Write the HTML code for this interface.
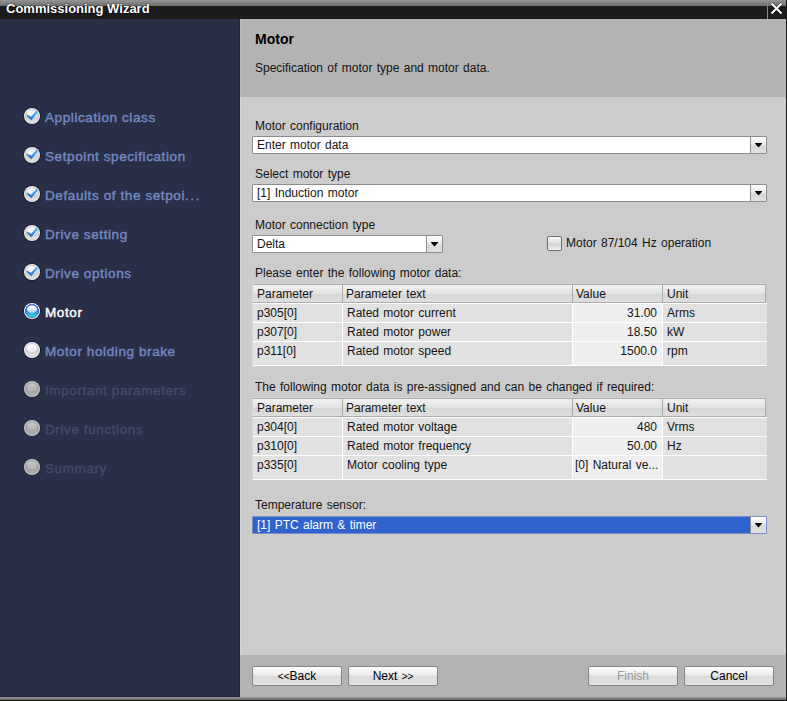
<!DOCTYPE html>
<html><head><meta charset="utf-8">
<style>
*{margin:0;padding:0;box-sizing:border-box}
html,body{width:787px;height:701px;overflow:hidden;background:#cccccc}
body{position:relative;font-family:"Liberation Sans",sans-serif;font-size:12px;color:#000}
.a{position:absolute;white-space:nowrap}
.t12{font-size:12px;line-height:14px;word-spacing:1px;color:#141414}
.item{left:45px;font-size:13.5px;line-height:16px;letter-spacing:0.6px;-webkit-text-stroke:0.45px currentColor;color:#7088c0}
.item.cur{color:#ffffff}
.item.dis{color:#434a67}
.dd{left:252px;width:515px;height:18px;border:1px solid #8c8c8c;border-radius:1px;background:#fff}
.dd .btn{position:absolute;right:0;top:0;width:16px;height:16px;border-left:1px solid #8c8c8c;background:linear-gradient(#ffffff,#ececec 45%,#d9d9d9 55%,#e2e2e2)}
.dd .btn:after{content:"";position:absolute;left:3.5px;top:6px;width:8px;height:4.5px;background:#000;clip-path:polygon(0 0,100% 0,50% 100%)}
.btn2{height:20px;width:90px;border:1px solid #868686;border-radius:2px;background:linear-gradient(#fdfdfd,#ececec 45%,#d9d9d9 52%,#e3e3e3);text-align:center;font-size:12px;line-height:18px;word-spacing:1px;color:#000}
.thd{height:19px;border-top:1px solid #ababab;border-bottom:1px solid #ababab;background:linear-gradient(#f3f3f3,#e2e2e2 50%,#d6d6d6 52%,#dedede)}
</style></head><body>
<div class="a" style="left:0px;top:0px;width:787px;height:19px;background:#1c1c1c"></div>
<div class="a" style="left:0px;top:0px;width:786px;height:6px;background:linear-gradient(#959595,#6c6c6c)"></div>
<div class="a" style="left:6px;top:1px;font-weight:bold;font-size:13px;line-height:15px;color:#fff;text-shadow:0 0 1px #000,0 0 1px #000">Commissioning Wizard</div>
<div class="a" style="left:767px;top:0px;width:1px;height:19px;background:#8a8a8a"></div>
<svg class="a" style="left:768px;top:0" width="19" height="19" viewBox="0 0 19 19"><path d="M3.5 3.5 L13.5 13.5 M13.5 3.5 L3.5 13.5" stroke="#000" stroke-opacity="0.6" stroke-width="3.2"/><path d="M3.5 3.5 L13.5 13.5 M13.5 3.5 L3.5 13.5" stroke="#fff" stroke-width="2"/></svg>
<div class="a" style="left:0px;top:19px;width:240px;height:678px;background:#2a2f48"></div>
<div class="a" style="left:239px;top:19px;width:1px;height:678px;background:#1f2540"></div>
<div class="a" style="left:240px;top:19px;width:546px;height:78px;background:#b3b3b3"></div>
<div class="a" style="left:240px;top:97px;width:546px;height:558px;background:#cccccc"></div>
<div class="a" style="left:240px;top:655px;width:546px;height:42px;background:#b3b3b3"></div>
<div class="a" style="left:240px;top:19px;width:1px;height:78px;background:#bababa"></div>
<div class="a" style="left:240px;top:97px;width:1px;height:558px;background:#d4d4d4"></div>
<div class="a" style="left:0px;top:697px;width:787px;height:1px;background:#8f8f8f"></div>
<div class="a" style="left:0px;top:698px;width:787px;height:1px;background:#7e7e7e"></div>
<div class="a" style="left:0px;top:699px;width:787px;height:1px;background:#6e6e6e"></div>
<div class="a" style="left:0px;top:700px;width:787px;height:1px;background:#151515"></div>
<div class="a" style="left:0px;top:696px;width:239px;height:1px;background:#20263f"></div>
<div class="a" style="left:786px;top:19px;width:1px;height:682px;background:#1a1a1a"></div>
<svg width="0" height="0" style="position:absolute"><defs>
<linearGradient id="gW" x1="0" y1="0" x2="0" y2="1"><stop offset="0" stop-color="#d8d8d8"/><stop offset="0.6" stop-color="#d0d0d0"/><stop offset="1" stop-color="#e4e4e4"/></linearGradient><linearGradient id="gHW" x1="0" y1="0" x2="0" y2="1"><stop offset="0" stop-color="#ffffff"/><stop offset="1" stop-color="#ececec"/></linearGradient><linearGradient id="gHG" x1="0" y1="0" x2="0" y2="1"><stop offset="0" stop-color="#c4c4c4"/><stop offset="1" stop-color="#b4b4b4"/></linearGradient>
<linearGradient id="gG" x1="0" y1="0" x2="0" y2="1"><stop offset="0" stop-color="#a8a8a8"/><stop offset="0.6" stop-color="#a4a4a4"/><stop offset="1" stop-color="#b0b0b0"/></linearGradient>
<linearGradient id="gB" x1="0" y1="0" x2="0" y2="1"><stop offset="0" stop-color="#2838c8"/><stop offset="0.45" stop-color="#2a88e0"/><stop offset="0.62" stop-color="#2a9ae0"/><stop offset="0.75" stop-color="#2cc8c4"/><stop offset="1" stop-color="#48c4f8"/></linearGradient><linearGradient id="gH" x1="0" y1="0" x2="0" y2="1"><stop offset="0" stop-color="#ffffff"/><stop offset="0.5" stop-color="#e0f0ff"/><stop offset="1" stop-color="#9cc4f0"/></linearGradient>
<linearGradient id="gC" x1="0" y1="1" x2="1" y2="0"><stop offset="0" stop-color="#0c58c0"/><stop offset="0.5" stop-color="#2c9cf0"/><stop offset="1" stop-color="#50c8ff"/></linearGradient>
</defs></svg>
<div class="a item" style="top:110px">Application class</div>
<svg class="a" style="left:23px;top:107px" width="18" height="18" viewBox="0 0 18 18"><circle cx="9" cy="9" r="8.7" fill="#080c1c" opacity="0.75"/><circle cx="9" cy="9" r="8" fill="#f4f4f4"/><circle cx="9" cy="9" r="6.7" fill="url(#gW)" stroke="#c8c8c8" stroke-width="0.7"/><ellipse cx="9" cy="7.2" rx="5.0" ry="3.9" fill="url(#gHW)"/><path d="M3.9 7.9 L8.3 10.0 L13.7 3.7 L14.5 5.5 L8.3 13.1 L4.3 9.2 Z" fill="url(#gC)" stroke="#1a68c8" stroke-width="0.4"/></svg>
<div class="a item" style="top:149px">Setpoint specification</div>
<svg class="a" style="left:23px;top:146px" width="18" height="18" viewBox="0 0 18 18"><circle cx="9" cy="9" r="8.7" fill="#080c1c" opacity="0.75"/><circle cx="9" cy="9" r="8" fill="#f4f4f4"/><circle cx="9" cy="9" r="6.7" fill="url(#gW)" stroke="#c8c8c8" stroke-width="0.7"/><ellipse cx="9" cy="7.2" rx="5.0" ry="3.9" fill="url(#gHW)"/><path d="M3.9 7.9 L8.3 10.0 L13.7 3.7 L14.5 5.5 L8.3 13.1 L4.3 9.2 Z" fill="url(#gC)" stroke="#1a68c8" stroke-width="0.4"/></svg>
<div class="a item" style="top:188px">Defaults of the setpoi<span style="letter-spacing:1.6px">...</span></div>
<svg class="a" style="left:23px;top:185px" width="18" height="18" viewBox="0 0 18 18"><circle cx="9" cy="9" r="8.7" fill="#080c1c" opacity="0.75"/><circle cx="9" cy="9" r="8" fill="#f4f4f4"/><circle cx="9" cy="9" r="6.7" fill="url(#gW)" stroke="#c8c8c8" stroke-width="0.7"/><ellipse cx="9" cy="7.2" rx="5.0" ry="3.9" fill="url(#gHW)"/><path d="M3.9 7.9 L8.3 10.0 L13.7 3.7 L14.5 5.5 L8.3 13.1 L4.3 9.2 Z" fill="url(#gC)" stroke="#1a68c8" stroke-width="0.4"/></svg>
<div class="a item" style="top:227px">Drive setting</div>
<svg class="a" style="left:23px;top:224px" width="18" height="18" viewBox="0 0 18 18"><circle cx="9" cy="9" r="8.7" fill="#080c1c" opacity="0.75"/><circle cx="9" cy="9" r="8" fill="#f4f4f4"/><circle cx="9" cy="9" r="6.7" fill="url(#gW)" stroke="#c8c8c8" stroke-width="0.7"/><ellipse cx="9" cy="7.2" rx="5.0" ry="3.9" fill="url(#gHW)"/><path d="M3.9 7.9 L8.3 10.0 L13.7 3.7 L14.5 5.5 L8.3 13.1 L4.3 9.2 Z" fill="url(#gC)" stroke="#1a68c8" stroke-width="0.4"/></svg>
<div class="a item" style="top:266px">Drive options</div>
<svg class="a" style="left:23px;top:263px" width="18" height="18" viewBox="0 0 18 18"><circle cx="9" cy="9" r="8.7" fill="#080c1c" opacity="0.75"/><circle cx="9" cy="9" r="8" fill="#f4f4f4"/><circle cx="9" cy="9" r="6.7" fill="url(#gW)" stroke="#c8c8c8" stroke-width="0.7"/><ellipse cx="9" cy="7.2" rx="5.0" ry="3.9" fill="url(#gHW)"/><path d="M3.9 7.9 L8.3 10.0 L13.7 3.7 L14.5 5.5 L8.3 13.1 L4.3 9.2 Z" fill="url(#gC)" stroke="#1a68c8" stroke-width="0.4"/></svg>
<div class="a item cur" style="top:305px">Motor</div>
<svg class="a" style="left:23px;top:302px" width="18" height="18" viewBox="0 0 18 18"><circle cx="9" cy="9" r="8.7" fill="#080c1c" opacity="0.75"/><circle cx="9" cy="9" r="8" fill="#ffffff"/><circle cx="9" cy="9" r="6.7" fill="url(#gB)" stroke="#2a50d0" stroke-width="0.7"/><ellipse cx="9" cy="7.2" rx="5.0" ry="3.9" fill="url(#gH)"/></svg>
<div class="a item" style="top:344px">Motor holding brake</div>
<svg class="a" style="left:23px;top:341px" width="18" height="18" viewBox="0 0 18 18"><circle cx="9" cy="9" r="8.7" fill="#080c1c" opacity="0.75"/><circle cx="9" cy="9" r="8" fill="#f8f8f8"/><circle cx="9" cy="9" r="6.7" fill="url(#gW)" stroke="#c8c8c8" stroke-width="0.7"/><ellipse cx="9" cy="7.2" rx="5.0" ry="3.9" fill="url(#gHW)"/></svg>
<div class="a item dis" style="top:383px">Important parameters</div>
<svg class="a" style="left:23px;top:380px" width="18" height="18" viewBox="0 0 18 18"><circle cx="9" cy="9" r="8.7" fill="#1e2440" opacity="0.75"/><circle cx="9" cy="9" r="8" fill="#cfcfcf"/><circle cx="9" cy="9" r="6.7" fill="url(#gG)" stroke="#a0a0a0" stroke-width="0.7"/><ellipse cx="9" cy="7.2" rx="5.0" ry="3.9" fill="url(#gHG)"/></svg>
<div class="a item dis" style="top:422px">Drive functions</div>
<svg class="a" style="left:23px;top:419px" width="18" height="18" viewBox="0 0 18 18"><circle cx="9" cy="9" r="8.7" fill="#1e2440" opacity="0.75"/><circle cx="9" cy="9" r="8" fill="#cfcfcf"/><circle cx="9" cy="9" r="6.7" fill="url(#gG)" stroke="#a0a0a0" stroke-width="0.7"/><ellipse cx="9" cy="7.2" rx="5.0" ry="3.9" fill="url(#gHG)"/></svg>
<div class="a item dis" style="top:461px">Summary</div>
<svg class="a" style="left:23px;top:458px" width="18" height="18" viewBox="0 0 18 18"><circle cx="9" cy="9" r="8.7" fill="#1e2440" opacity="0.75"/><circle cx="9" cy="9" r="8" fill="#cfcfcf"/><circle cx="9" cy="9" r="6.7" fill="url(#gG)" stroke="#a0a0a0" stroke-width="0.7"/><ellipse cx="9" cy="7.2" rx="5.0" ry="3.9" fill="url(#gHG)"/></svg>
<div class="a" style="left:255px;top:31px;font-weight:bold;font-size:14px;line-height:16px;color:#000">Motor</div>
<div class="a t12" style="left:255px;top:61px;">Specification of motor type and motor data.</div>
<div class="a t12" style="left:255px;top:119px;">Motor configuration</div>
<div class="a dd" style="top:136px;width:515px"><span class="a t12" style="left:4px;top:1px;color:#141414">Enter motor data</span><div class="btn"></div></div>
<div class="a t12" style="left:255px;top:167px;">Select motor type</div>
<div class="a dd" style="top:184px;width:515px"><span class="a t12" style="left:4px;top:1px;color:#141414">[1] Induction motor</span><div class="btn"></div></div>
<div class="a t12" style="left:255px;top:218px;">Motor connection type</div>
<div class="a dd" style="top:235px;width:191px"><span class="a t12" style="left:4px;top:1px;color:#141414">Delta</span><div class="btn"></div></div>
<div class="a" style="left:547px;top:236px;width:15px;height:15px;border:1px solid #6e6e6e;border-radius:2px;background:linear-gradient(#fafafa,#e2e2e2 45%,#d2d2d2 55%,#f4f4f4)"></div>
<div class="a t12" style="left:566px;top:236px;">Motor 87/104 Hz operation</div>
<div class="a t12" style="left:255px;top:266px;">Please enter the following motor data:</div>
<div class="a" style="left:252px;top:283px;width:515px;height:1px;background:#d4d4d4"></div>
<div class="a" style="left:252px;top:284px;width:1px;height:82px;background:#d6d6d6"></div>
<div class="a thd" style="left:253px;top:284px;width:513px"></div>
<div class="a" style="left:342px;top:285px;width:1px;height:17px;background:#ababab"></div>
<div class="a" style="left:572px;top:285px;width:1px;height:17px;background:#ababab"></div>
<div class="a" style="left:662px;top:285px;width:1px;height:17px;background:#ababab"></div>
<div class="a" style="left:765px;top:285px;width:1px;height:17px;background:#ababab"></div>
<div class="a t12" style="left:257px;top:287px;">Parameter</div>
<div class="a t12" style="left:346px;top:287px;">Parameter text</div>
<div class="a t12" style="left:576px;top:287px;">Value</div>
<div class="a t12" style="left:667px;top:287px;">Unit</div>
<div class="a" style="left:253px;top:303px;width:514px;height:62px;background:#e1e1e1"></div>
<div class="a" style="left:573px;top:304px;width:89px;height:61px;background:#efefef"></div>
<div class="a" style="left:253px;top:303px;width:514px;height:1px;background:#fff"></div>
<div class="a" style="left:253px;top:322px;width:514px;height:1px;background:#fff"></div>
<div class="a" style="left:253px;top:341px;width:514px;height:1px;background:#fff"></div>
<div class="a" style="left:253px;top:365px;width:514px;height:1px;background:#fff"></div>
<div class="a" style="left:342px;top:304px;width:1px;height:61px;background:#fff"></div>
<div class="a" style="left:572px;top:304px;width:1px;height:61px;background:#fff"></div>
<div class="a" style="left:662px;top:304px;width:1px;height:61px;background:#fff"></div>
<div class="a t12" style="left:257px;top:306px;">p305[0]</div>
<div class="a t12" style="left:347px;top:306px;">Rated motor current</div>
<div class="a t12" style="left:573px;top:306px;width:84px;text-align:right">31.00</div>
<div class="a t12" style="left:667px;top:306px;">Arms</div>
<div class="a t12" style="left:257px;top:325px;">p307[0]</div>
<div class="a t12" style="left:347px;top:325px;">Rated motor power</div>
<div class="a t12" style="left:573px;top:325px;width:84px;text-align:right">18.50</div>
<div class="a t12" style="left:667px;top:325px;">kW</div>
<div class="a t12" style="left:257px;top:344px;">p311[0]</div>
<div class="a t12" style="left:347px;top:344px;">Rated motor speed</div>
<div class="a t12" style="left:573px;top:344px;width:84px;text-align:right">1500.0</div>
<div class="a t12" style="left:667px;top:344px;">rpm</div>
<div class="a t12" style="left:255px;top:380px;">The following motor data is pre-assigned and can be changed if required:</div>
<div class="a" style="left:252px;top:397px;width:515px;height:1px;background:#d4d4d4"></div>
<div class="a" style="left:252px;top:398px;width:1px;height:82px;background:#d6d6d6"></div>
<div class="a thd" style="left:253px;top:398px;width:513px"></div>
<div class="a" style="left:342px;top:399px;width:1px;height:17px;background:#ababab"></div>
<div class="a" style="left:572px;top:399px;width:1px;height:17px;background:#ababab"></div>
<div class="a" style="left:662px;top:399px;width:1px;height:17px;background:#ababab"></div>
<div class="a" style="left:765px;top:399px;width:1px;height:17px;background:#ababab"></div>
<div class="a t12" style="left:257px;top:401px;">Parameter</div>
<div class="a t12" style="left:346px;top:401px;">Parameter text</div>
<div class="a t12" style="left:576px;top:401px;">Value</div>
<div class="a t12" style="left:667px;top:401px;">Unit</div>
<div class="a" style="left:253px;top:417px;width:514px;height:62px;background:#e1e1e1"></div>
<div class="a" style="left:573px;top:418px;width:89px;height:61px;background:#efefef"></div>
<div class="a" style="left:253px;top:417px;width:514px;height:1px;background:#fff"></div>
<div class="a" style="left:253px;top:436px;width:514px;height:1px;background:#fff"></div>
<div class="a" style="left:253px;top:455px;width:514px;height:1px;background:#fff"></div>
<div class="a" style="left:253px;top:479px;width:514px;height:1px;background:#fff"></div>
<div class="a" style="left:342px;top:418px;width:1px;height:61px;background:#fff"></div>
<div class="a" style="left:572px;top:418px;width:1px;height:61px;background:#fff"></div>
<div class="a" style="left:662px;top:418px;width:1px;height:61px;background:#fff"></div>
<div class="a t12" style="left:257px;top:420px;">p304[0]</div>
<div class="a t12" style="left:347px;top:420px;">Rated motor voltage</div>
<div class="a t12" style="left:573px;top:420px;width:84px;text-align:right">480</div>
<div class="a t12" style="left:667px;top:420px;">Vrms</div>
<div class="a t12" style="left:257px;top:439px;">p310[0]</div>
<div class="a t12" style="left:347px;top:439px;">Rated motor frequency</div>
<div class="a t12" style="left:573px;top:439px;width:84px;text-align:right">50.00</div>
<div class="a t12" style="left:667px;top:439px;">Hz</div>
<div class="a t12" style="left:257px;top:458px;">p335[0]</div>
<div class="a t12" style="left:347px;top:458px;">Motor cooling type</div>
<div class="a t12" style="left:575px;top:458px;">[0] Natural ve...</div>
<div class="a t12" style="left:667px;top:458px;"></div>
<div class="a t12" style="left:255px;top:498px;">Temperature sensor:</div>
<div class="a dd" style="top:516px;width:515px;background:#3163cf;border-color:#7b8fc6"><span class="a t12" style="left:4px;top:1px;color:#fff">[1] PTC alarm &amp; timer</span><div class="btn"></div></div>
<div class="a btn2" style="left:252px;top:666px;color:#000"><span style="font-size:10px">&lt;&lt;</span>Back</div>
<div class="a btn2" style="left:348px;top:666px;color:#000">Next <span style="font-size:10px">&gt;&gt;</span></div>
<div class="a btn2" style="left:588px;top:666px;color:#9a9a9a">Finish</div>
<div class="a btn2" style="left:684px;top:666px;color:#000">Cancel</div>
</body></html>
